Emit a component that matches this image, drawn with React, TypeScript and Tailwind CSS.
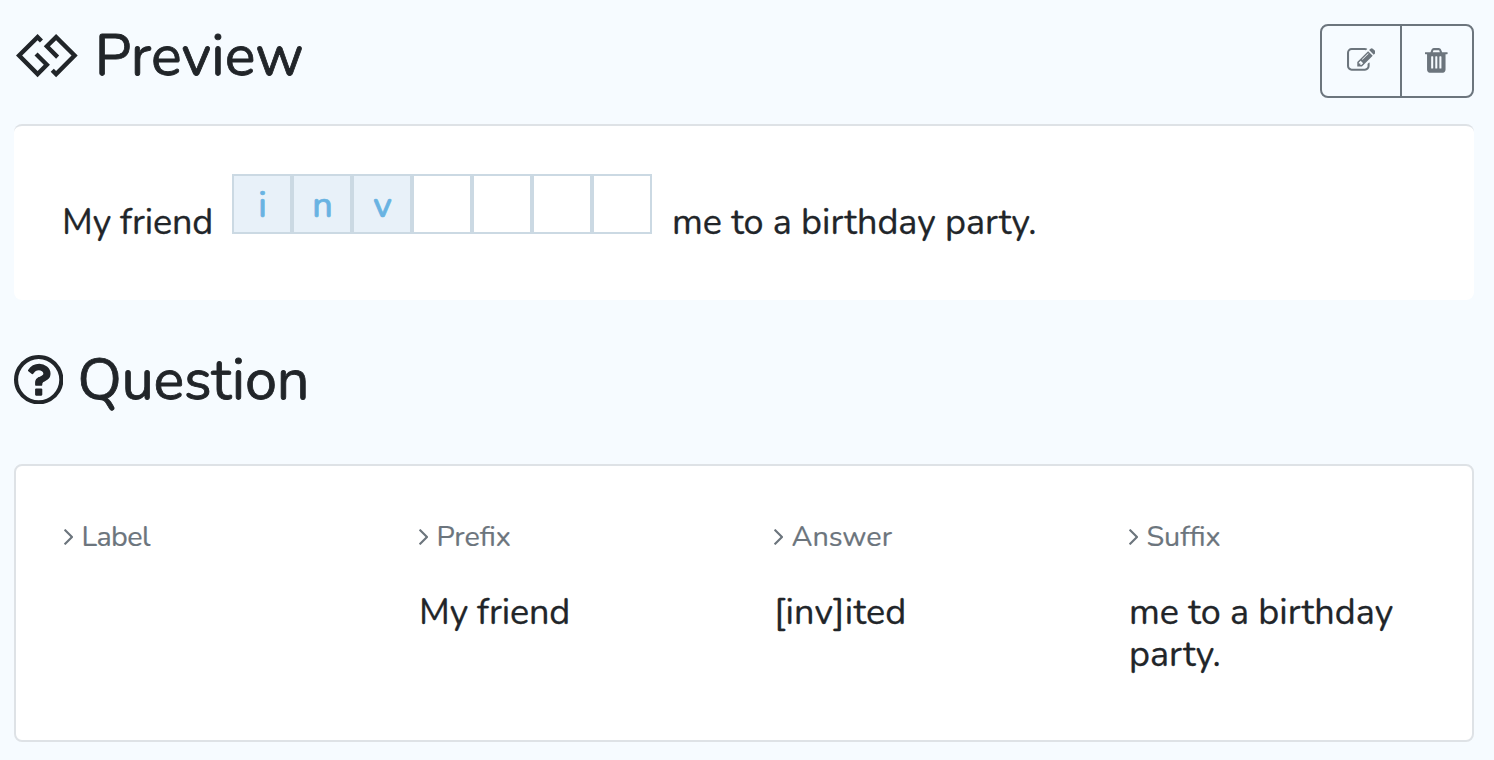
import type { ReactNode } from "react";

const letters = ["i", "n", "v", "", "", "", ""];

function GgIcon() {
  return (
    <svg viewBox="64 160 1920 1344" className="h-[43.2px] w-[61.7px] shrink-0" fill="currentColor">
      <path d="M736 736l384 384-384 384-672-672 672-672 168 168-96 96-72-72-480 480 480 480 193-193-289-287zm576-576l672 672-672 672-168-168 96-96 72 72 480-480-480-480-193 193 289 287-96 96-384-384z" />
    </svg>
  );
}

function QuestionIcon() {
  return (
    <svg viewBox="128 128 1536 1536" className="mt-px size-[49.4px] shrink-0" fill="currentColor">
      <path d="M1008 1200v160q0 14-9 23t-23 9h-160q-14 0-23-9t-9-23v-160q0-14 9-23t23-9h160q14 0 23 9t9 23zm256-496q0 50-15 90t-45.500 69-52 44-59.500 36q-32 18-46.500 28t-26 24-11.500 29v32q0 14-9 23t-23 9h-160q-14 0-23-9t-9-23v-68q0-35 10.500-64.500t24-47.500 39-35.500 41-25.500 44.500-21q53-25 75-43t22-49q0-42-43.500-71.500t-95.500-29.500q-56 0-95 27-29 20-80 83-9 12-25 12-11 0-19-6l-108-82q-10-7-12-20t5-23q122-192 349-192 129 0 238.500 89.500t109.500 214.500zm-368-448q-130 0-248.500 51t-204 136.500-136.500 204-51 248.500 51 248.500 136.500 204 204 136.500 248.500 51 248.500-51 204-136.500 136.500-204 51-248.500-51-248.500-136.500-204-204-136.500-248.500-51zm768 640q0 209-103 385.500t-279.500 279.500-385.500 103-385.500-103-279.500-279.500-103-385.500 103-385.500 279.500-279.500 385.500-103 385.500 103 279.500 279.500 103 385.500z" />
    </svg>
  );
}

function EditIcon() {
  return (
    <svg viewBox="0 0 1792 1792" className="size-[28.8px] shrink-0" fill="currentColor">
      <path d="M888 1184l116-116-152-152-116 116v56h96v96h56zm440-720q-16-16-33 1l-350 350q-17 17-1 33t33-1l350-350q17-17 1-33zm80 594v190q0 119-84.500 203.500t-203.500 84.500h-832q-119 0-203.500-84.500t-84.500-203.500v-832q0-119 84.500-203.500t203.500-84.500h832q63 0 117 25 15 7 18 23 3 17-9 29l-49 49q-14 14-32 8-23-6-45-6h-832q-66 0-113 47t-47 113v832q0 66 47 113t113 47h832q66 0 113-47t47-113v-126q0-13 9-22l64-64q15-15 35-7t20 29zm-96-738l288 288-672 672h-288v-288zm444 132l-92 92-288-288 92-92q28-28 68-28t68 28l152 152q28 28 28 68t-28 68z" />
    </svg>
  );
}

function TrashIcon() {
  return (
    <svg viewBox="192 0 1408 1792" className="h-[28.8px] w-[22.6px] shrink-0" fill="currentColor">
      <path d="M704 1376v-704q0-14-9-23t-23-9h-64q-14 0-23 9t-9 23v704q0 14 9 23t23 9h64q14 0 23-9t9-23zm256 0v-704q0-14-9-23t-23-9h-64q-14 0-23 9t-9 23v704q0 14 9 23t23 9h64q14 0 23-9t9-23zm256 0v-704q0-14-9-23t-23-9h-64q-14 0-23 9t-9 23v704q0 14 9 23t23 9h64q14 0 23-9t9-23zm-544-992h448l-48-117q-7-9-17-11h-317q-10 2-17 11zm928 32v64q0 14-9 23t-23 9h-96v948q0 83-47 143.500t-113 60.500h-832q-66 0-113-58.500t-47-141.500v-952h-96q-14 0-23-9t-9-23v-64q0-14 9-23t23-9h309l70-167q15-37 54-63t79-26h320q40 0 79 26t54 63l70 167h309q14 0 23 9t9 23z" />
    </svg>
  );
}

function AngleIcon() {
  return (
    <svg viewBox="589 461 582 998" className="h-4 w-[9.4px] shrink-0" fill="currentColor">
      <path d="M1171 960q0 13-10 23l-466 466q-10 10-23 10t-23-10l-50-50q-10-10-10-23t10-23l393-393-393-393q-10-10-10-23t10-23l50-50q10-10 23-10t23 10l466 466q10 10 10 23z" />
    </svg>
  );
}

function Field({
  label,
  labelClass = "",
  valueClass = "",
  children,
}: {
  label: string;
  labelClass?: string;
  valueClass?: string;
  children?: ReactNode;
}) {
  return (
    <div className="w-[355px] shrink-0 pr-12">
      <div className="flex h-[43px] items-center gap-2 text-[28.8px] text-[#6c757d] [-webkit-text-stroke:0.2px_currentColor]">
        <AngleIcon />
        <span className={labelClass}>{label}</span>
      </div>
      <p className="mt-[34px] text-[36px] leading-[42px] [-webkit-text-stroke:0.3px_currentColor]">
        <span className={valueClass}>{children}</span>
      </p>
    </div>
  );
}

export default function App() {
  return (
    <main className="h-[760px] w-[1494px] overflow-hidden bg-[#f6fbff] px-3.5 font-['Nunito','Lato',sans-serif] text-[#212529]">
      <header className="flex h-[124px] items-start justify-between pr-1.5 pt-6">
        <h2 className="flex h-16 items-center gap-[17px] pl-0.5 text-[57.6px] leading-[62px]">
          <GgIcon />
          <span className="tracking-[0.15px] [-webkit-text-stroke:0.8px_currentColor]">Preview</span>
        </h2>
        <div className="flex h-[74px] w-[154px] rounded-lg border-2 border-[#6c757d] text-[#6c757d]">
          <button aria-label="Edit" className="flex w-20 items-center justify-center border-r-2 border-[#6c757d] pb-0.5">
            <EditIcon />
          </button>
          <button aria-label="Delete" className="flex flex-1 items-center justify-center pb-0.5 pr-px">
            <TrashIcon />
          </button>
        </div>
      </header>

      <section className="mr-1.5 flex h-44 rounded-lg border-t-2 border-[#dee2e6] bg-white pl-12 pt-12 text-[36px]">
        <span className="mt-[27px] w-[170px] leading-[43px] tracking-[-0.15px] [-webkit-text-stroke:0.3px_currentColor]">My friend</span>
        <div className="flex h-[60px] w-[420px]">
          {letters.map((letter, i) => (
            <span
              key={i}
              className={
                letter
                  ? "flex w-[60px] items-center justify-center border-2 border-[#cbd9e3] bg-[#e8f1f9] pl-px pt-[3px] font-medium text-[#69b3e2] [-webkit-text-stroke:0.7px_currentColor]"
                  : "w-[60px] border-2 border-[#cbd9e3] bg-white"
              }
            >
              {letter}
            </span>
          ))}
        </div>
        <span className="ml-5 mt-[27px] leading-[43px] tracking-[-0.03px] [-webkit-text-stroke:0.3px_currentColor]">me to a birthday party.</span>
      </section>

      <h2 className="flex h-[164px] items-start gap-3.5 pt-[54px] text-[57.6px] leading-[52px]">
        <QuestionIcon />
        <span className="tracking-[-0.15px] [-webkit-text-stroke:0.8px_currentColor]">Question</span>
      </h2>

      <section className="mr-1.5 flex h-[278px] rounded-lg border-2 border-[#dee2e6] bg-white pl-12 pt-[49px]">
        <Field label="Label" labelClass="tracking-[-0.6px]" />
        <Field label="Prefix" valueClass="tracking-[-0.15px]">My friend</Field>
        <Field label="Answer" valueClass="tracking-[0.2px]">[inv]ited</Field>
        <Field label="Suffix">me to a birthday party.</Field>
      </section>
    </main>
  );
}
